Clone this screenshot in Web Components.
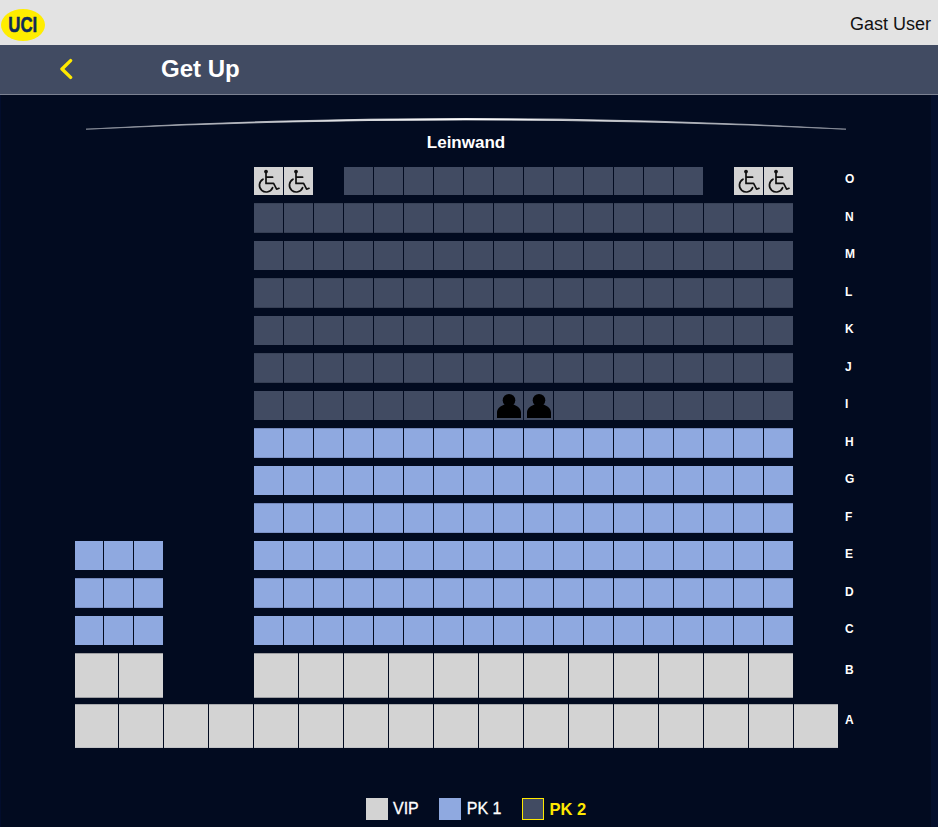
<!DOCTYPE html>
<html lang="de">
<head>
<meta charset="utf-8">
<title>Get Up</title>
<style>
html,body{margin:0;padding:0;height:827px;overflow:hidden;background:#020b20;font-family:"Liberation Sans",Arial,sans-serif}
</style>
</head>
<body>
<uci-app>
  <uci-topbar>Gast User</uci-topbar>
  <uci-titlebar>Get Up</uci-titlebar>
  <seat-plan></seat-plan>
  <seat-legend></seat-legend>
</uci-app>
<script>
function tpl(html){const t=document.createElement('template');t.innerHTML=html;return t;}
class Base extends HTMLElement{
  constructor(){super();this.attachShadow({mode:'open'}).appendChild(this.constructor.t.content.cloneNode(true));}
}
class UciApp extends Base{}
UciApp.t=tpl(`<style>:host{display:flex;flex-direction:column;width:938px;height:827px;position:relative;color:#fff;
  border-left:1px solid #020d2c;box-sizing:border-box}
  .edge{position:absolute;right:0;top:95px;bottom:0;width:7px;background:#040f2c}</style><slot></slot><div class="edge"></div>`);
class UciTopbar extends Base{}
UciTopbar.t=tpl(`<style>:host{display:flex;align-items:center;justify-content:space-between;height:45px;margin-left:-1px;background:#e3e3e3;color:#111;font-size:18px;padding:0 7px 0 1px;box-sizing:border-box}
  svg{display:block;margin-top:5px}
  .u{font:bold 22px "Liberation Sans",Arial,sans-serif}
  span{position:relative;top:2px}</style>
  <svg width="44" height="32" viewBox="0 0 44 32"><ellipse cx="22" cy="16" rx="22" ry="16" fill="#ffed00"/><text class="u" x="7.3" y="23.4" textLength="29" lengthAdjust="spacingAndGlyphs" fill="#0e2a5a" stroke="#0e2a5a" stroke-width=".5">UCI</text></svg>
  <span><slot></slot></span>`);
class UciTitlebar extends Base{}
UciTitlebar.t=tpl(`<style>:host{display:flex;align-items:center;height:50px;margin-left:-1px;background:#414b62;border-bottom:1px solid #7c8292;box-sizing:border-box;padding-left:59px;font-size:24px;font-weight:bold;color:#fff}
  svg{display:block;flex:none;margin-right:88px;margin-top:-1px}
  span{position:relative;top:-1px}</style>
  <svg width="14" height="22" viewBox="0 0 14 22"><path d="M11.6 2.6 3 11l8.6 8.4" fill="none" stroke="#ffe900" stroke-width="3.4" stroke-linecap="round" stroke-linejoin="round"/></svg>
  <span><slot></slot></span>`);
class SeatCell extends Base{
  connectedCallback(){
    const s=this.shadowRoot.querySelector('.s');
    s.classList.add(this.getAttribute('kind'));
    if(this.hasAttribute('edge'))s.classList.add(this.getAttribute('edge'));
    if(this.hasAttribute('icon'))s.innerHTML=SeatCell.icons[this.getAttribute('icon')];
    this.style.gridColumn=this.getAttribute('col')+' / span '+this.getAttribute('span');
  }
}
SeatCell.icons={
 wheel:`<svg width="29" height="28" viewBox="0 0 29 28"><circle cx="12" cy="4.6" r="1.9" fill="#111"/><path d="M12 6v10.4h7.6l3 5.8 2.4-.9M12 10.2h6.6M9 12.2a6.8 6.8 0 1 0 9.6 8.4" fill="none" stroke="#111" stroke-width="1.7" stroke-linecap="round" stroke-linejoin="round"/></svg>`,
 person:`<svg width="29" height="28" viewBox="0 0 29 28"><circle cx="15" cy="9.3" r="6.3" fill="#000"/><path d="M3 27v-5.5c0-3.5 3-6.5 7.5-8 2.5 1.5 6.5 1.5 9 0 4.5 1.5 7.5 4.5 7.5 8V27z" fill="#000"/></svg>`
};
SeatCell.t=tpl(`<style>:host{display:block;min-width:0}
  .s{height:100%;margin-right:1px;position:relative;box-sizing:border-box}
  svg{display:block;position:absolute;left:0;top:0}
  .dark{background:#414b62}
  .dark.e{box-shadow:inset 0 1px #394358,inset 0 -1px #363f54}
  .blue{background:#8fa9e0}
  .blue.e{box-shadow:inset 0 1px #7489bd,inset 0 -1px #7d92c6}
  .grey{background:#d3d3d3}
  .grey.e{box-shadow:inset 0 1px #9c9da1,inset 0 -1px #9c9da1}
  .grey.a{box-shadow:inset 0 1px #a9aaad,inset 0 -1px #c2c3c6}
  .wc{background:#d3d3d3;margin-top:1px;height:28px}
  .dk2{background:#414b62;margin-top:1px;height:28px}</style><div class="s"></div>`);
class SeatRow extends Base{
  connectedCallback(){
    this.style.height=this.getAttribute('h')+'px';
    if(this.hasAttribute('mt'))this.style.marginTop=this.getAttribute('mt')+'px';
    this.shadowRoot.querySelector('.l').style.marginTop=this.getAttribute('lt')+'px';
  }
}
SeatRow.t=tpl(`<style>:host{display:flex;align-items:stretch;padding-left:73.5px}
  .g{display:grid;grid-template-columns:repeat(12,14.9583px) repeat(39,15px);grid-template-rows:1fr;flex:none}
  .l{margin-left:6px;font-size:12px;font-weight:bold;align-self:flex-start;line-height:14px;color:#fff}</style>
  <div class="g"><slot></slot></div><div class="l"><slot name="label"></slot></div>`);
class SeatPlan extends Base{
  connectedCallback(){
    const rows=this.shadowRoot.querySelector('.rows');
    const add=(row,kind,col,span,n,o={})=>{for(let i=0;i<n;i++){const c=document.createElement('seat-cell');c.setAttribute('kind',kind);c.setAttribute('col',col+i*span);c.setAttribute('span',span);if(o.icon)c.setAttribute('icon',o.icon);if(o.edge)c.setAttribute('edge',o.edge);row.appendChild(c);}};
    const mk=(name,h,mt,lt)=>{const r=document.createElement('seat-row');r.setAttribute('h',h);r.setAttribute('lt',lt);if(mt!==undefined)r.setAttribute('mt',mt);const l=document.createElement('span');l.slot='label';l.textContent=name;r.appendChild(l);rows.appendChild(r);return r;};
    // rows alternate 30/29 px tall: the taller ones carry the edge lines
    const std=(name)=>{const tall='NLJHFD'.includes(name);return {r:mk(name,tall?30:29,8,tall?7:6),edge:tall?'e':''};};
    let r=mk('O',29,undefined,6);
    add(r,'wc',13,2,2,{icon:'wheel'});add(r,'dk2',19,2,12);add(r,'wc',45,2,2,{icon:'wheel'});
    for(const n of ['N','M','L','K','J']){const x=std(n);add(x.r,'dark',13,2,18,{edge:x.edge});}
    {const x=std('I');add(x.r,'dark',13,2,8);add(x.r,'dark',29,2,2,{icon:'person'});add(x.r,'dark',33,2,8);}
    for(const n of ['H','G','F']){const x=std(n);add(x.r,'blue',13,2,18,{edge:x.edge});}
    for(const n of ['E','D','C']){const x=std(n);add(x.r,'blue',1,2,3,{edge:x.edge});add(x.r,'blue',13,2,18,{edge:x.edge});}
    r=mk('B',45,8,10);add(r,'grey',1,3,2,{edge:'e'});add(r,'grey',13,3,12,{edge:'e'});
    r=mk('A',44,6,9);add(r,'grey',1,3,17,{edge:'a'});
  }
}
SeatPlan.t=tpl(`<style>:host{display:block;flex:1}
  svg{display:block;margin:19px 0 0 84px}
  .t{font-size:17px;font-weight:bold;text-align:center;line-height:17px;width:930px;margin-top:-1px;color:#fff}
  .rows{margin-top:15px}</style>
  <svg width="762" height="21" viewBox="0 0 762 21"><defs><linearGradient id="g" gradientUnits="userSpaceOnUse" x1="1" y1="0" x2="761" y2="0"><stop offset="0" stop-color="#858a96"/><stop offset=".25" stop-color="#cfd1d6"/><stop offset=".5" stop-color="#fff"/><stop offset=".75" stop-color="#cfd1d6"/><stop offset="1" stop-color="#858a96"/></linearGradient></defs><path d="M1 15.2Q381-6.2 761 15.2Q381-3.4 1 15.2z" fill="url(#g)" stroke="url(#g)" stroke-width=".8"/></svg>
  <div class="t">Leinwand</div>
  <div class="rows"></div>`);
class SeatLegend extends Base{
  connectedCallback(){
    const w=this.shadowRoot.querySelector('.w');
    [['VIP','#d3d3d3',''],['PK 1','#8fa9e0','pk'],['PK 2','#414b62','on']].forEach(([n,c,o])=>{
      const d=document.createElement('div');d.className='i '+o;
      d.innerHTML=`<i style="background:${c}"></i><b>${n}</b>`;w.appendChild(d);
    });
  }
}
SeatLegend.t=tpl(`<style>:host{display:block;height:29px}
  .w{display:flex;gap:20px;padding-left:365px}
  .i{display:flex;align-items:center;gap:5px;font-size:16px;height:22px}
  i{display:block;width:22px;height:22px;box-sizing:border-box}
  b{font-weight:normal;color:#fff;-webkit-text-stroke:.3px #fff}
  .pk{gap:6px;margin-right:1px}
  .on i{border:1px solid #ffe900}
  .on b{font-size:16.5px;font-weight:bold;color:#ffe900;-webkit-text-stroke:0}</style><div class="w"></div>`);
customElements.define('uci-app',UciApp);
customElements.define('uci-topbar',UciTopbar);
customElements.define('uci-titlebar',UciTitlebar);
customElements.define('seat-cell',SeatCell);
customElements.define('seat-row',SeatRow);
customElements.define('seat-plan',SeatPlan);
customElements.define('seat-legend',SeatLegend);
</script>
</body>
</html>
